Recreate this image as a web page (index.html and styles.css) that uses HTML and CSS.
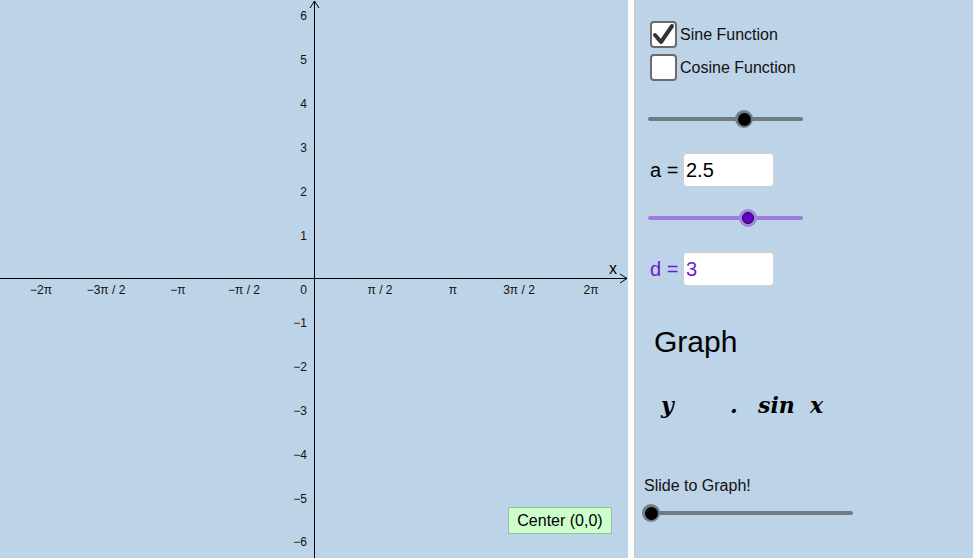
FILE: index.html
```html
<!DOCTYPE html>
<html>
<head>
<meta charset="utf-8">
<link rel="stylesheet" href="styles.css">
</head>
<body>
<div class="app">
  <div class="graphics">
    <svg class="canvas" width="628" height="558" viewBox="0 0 628 558">
      <g stroke="#000" stroke-width="1" fill="none">
        <line x1="0" y1="278.5" x2="627" y2="278.5"/>
        <polyline points="620,274 627,278.5 620,283"/>
        <line x1="314.5" y1="1" x2="314.5" y2="558"/>
        <polyline points="310,8 314.5,1 319,8"/>
      </g>
      <g class="lbl" text-anchor="end">
        <text x="307" y="20">6</text>
        <text x="307" y="64">5</text>
        <text x="307" y="108">4</text>
        <text x="307" y="152">3</text>
        <text x="307" y="196">2</text>
        <text x="307" y="240">1</text>
        <text x="307" y="294">0</text>
        <text x="307" y="327">−1</text>
        <text x="307" y="371">−2</text>
        <text x="307" y="415">−3</text>
        <text x="307" y="459">−4</text>
        <text x="307" y="503">−5</text>
        <text x="307" y="546">−6</text>
      </g>
      <g class="lbl" text-anchor="middle">
        <text x="41" y="294">−2π</text>
        <text x="106" y="294">−3π / 2</text>
        <text x="178" y="294">−π</text>
        <text x="244" y="294">−π / 2</text>
        <text x="380" y="294">π / 2</text>
        <text x="453" y="294">π</text>
        <text x="519" y="294">3π / 2</text>
        <text x="591" y="294">2π</text>
      </g>
      <text class="axisname" x="609" y="274">x</text>
    </svg>
    <div class="center-btn">Center (0,0)</div>
  </div>
  <div class="divider"></div>
  <div class="panel">
    <div class="check-row">
      <div class="box">
        <svg width="27" height="27" viewBox="0 0 27 27"><polyline points="5,14 11,21 22,5" fill="none" stroke="#333" stroke-width="4" stroke-linecap="round" stroke-linejoin="round"/></svg>
      </div>
      <span class="check-label">Sine Function</span>
    </div>
    <div class="check-row second">
      <div class="box"></div>
      <span class="check-label">Cosine Function</span>
    </div>

    <div class="slider s1">
      <div class="track gray"></div>
      <div class="knob gray-knob" style="left:87px"><div class="dot black"></div></div>
    </div>

    <div class="field-row">
      <span class="field-label">a =</span>
      <div class="input">2.5</div>
    </div>

    <div class="slider s2">
      <div class="track purple"></div>
      <div class="knob purple-knob" style="left:91px"><div class="dot violet"></div></div>
    </div>

    <div class="field-row d">
      <span class="field-label">d =</span>
      <div class="input">3</div>
    </div>

    <div class="title">Graph</div>

    <div class="math">
      <span class="m-y">y</span><span class="m-dot">.</span><span class="m-sin">sin</span><span class="m-x">x</span>
    </div>

    <div class="slide-label">Slide to Graph!</div>
    <div class="slider s3">
      <div class="track gray"></div>
      <div class="knob gray-knob" style="left:-8px"><div class="dot black"></div></div>
    </div>
  </div>
</div>
</body>
</html>
```
FILE: styles.css
```css
html, body {
  margin: 0;
  padding: 0;
  background: #bdd3e7;
  font-family: "Liberation Sans", Arial, sans-serif;
}
.app {
  display: flex;
  width: 973px;
  height: 558px;
  overflow: hidden;
  background: #bdd3e7;
}
.graphics {
  position: relative;
  width: 628px;
  height: 558px;
  flex: none;
}
.canvas {
  display: block;
}
.lbl text {
  font-family: "Liberation Sans", Arial, sans-serif;
  font-size: 12px;
  fill: #111;
}
.axisname {
  font-family: "Liberation Sans", Arial, sans-serif;
  font-size: 16px;
  fill: #000;
}
.center-btn {
  position: absolute;
  left: 508px;
  top: 507px;
  width: 102px;
  height: 25px;
  border: 1px solid #93c493;
  background: #ccffcc;
  font-size: 16px;
  line-height: 25px;
  text-align: center;
  color: #000;
}
.divider {
  flex: none;
  width: 6px;
  height: 558px;
  background: #fdfdfd;
  border-right: 1px solid #c9c9c9;
}
.panel {
  flex: 1;
  display: flex;
  flex-direction: column;
  padding-top: 21px;
  padding-left: 15px;
}
.check-row {
  display: flex;
  align-items: center;
  height: 27px;
  gap: 3px;
}
.check-row.second {
  margin-top: 6px;
}
.box {
  width: 23px;
  height: 23px;
  border: 2px solid #6b6b6b;
  border-radius: 4px;
  background: #fff;
  position: relative;
}
.box svg {
  position: absolute;
  left: -2px;
  top: -2px;
}
.check-label {
  font-size: 16px;
  color: #111;
}
.slider {
  position: relative;
  height: 20px;
  margin-left: -2px;
  width: 155px;
}
.s1 { margin-top: 28px; }
.s2 { margin-top: 21px; }
.s3 { margin-top: 8px; margin-left: 0; width: 203px; }
.track {
  position: relative;
  top: 8px;
  height: 4px;
  border-radius: 2px;
}
.track.gray { background: #6e7a84; }
.track.purple { background: #9c7ddd; }
.knob {
  position: absolute;
  top: 1px;
  width: 18px;
  height: 18px;
  border-radius: 50%;
  display: flex;
  align-items: center;
  justify-content: center;
}
.gray-knob { background: #707c86; }
.purple-knob { background: #a384e4; }
.dot {
  border-radius: 50%;
}
.dot.black {
  width: 13px;
  height: 13px;
  background: #000;
}
.dot.violet {
  width: 10px;
  height: 10px;
  background: #6600cc;
  border: 1px solid #111;
}
.field-row {
  display: flex;
  align-items: center;
  height: 34px;
  margin-top: 24px;
}
.field-label {
  font-size: 20px;
  color: #000;
  width: 33px;
}
.input {
  width: 87px;
  height: 32px;
  border: 1px solid #cfcfcf;
  border-radius: 4px;
  background: #fff;
  font-size: 20px;
  line-height: 32px;
  padding-left: 2px;
  color: #000;
}
.field-row.d .field-label,
.field-row.d .input {
  color: #6a1bd1;
}
.title {
  margin-top: 39px;
  margin-left: 4px;
  font-size: 30px;
  line-height: 34px;
  color: #000;
}
.math {
  margin-top: 33px;
  margin-left: 11px;
  height: 26px;
  line-height: 26px;
  display: flex;
  font-family: "DejaVu Serif", "Liberation Serif", serif;
  font-style: italic;
  font-weight: bold;
  font-size: 22px;
  color: #000;
}
.m-y { width: 69px; }
.m-dot { width: 28px; }
.m-sin { width: 52px; }
.slide-label {
  margin-top: 59px;
  margin-left: -6px;
  font-size: 16px;
  line-height: 18px;
  color: #111;
}
```
